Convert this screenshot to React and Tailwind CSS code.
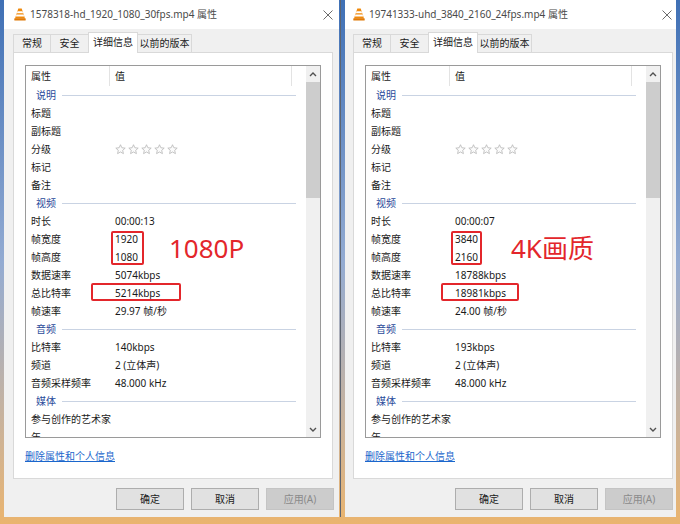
import React from "react";

const FONT = { fontFamily: '"Noto Sans", "Noto Sans CJK SC", sans-serif' };

function Vlc() {
  return (
    <svg width="12" height="13" viewBox="0 0 12 13">
      <path d="M4.3 0.5h3.4l3.3 10H1z" fill="#f08a0c" />
      <path d="M3.5 3.3h5l0.6 1.9H2.9z" fill="#ffffff" />
      <path d="M2.4 6.6h7.2l0.6 1.9H1.8z" fill="#ffffff" />
      <rect x="0.3" y="10.2" width="11.4" height="2.4" rx="0.6" fill="#e07a08" />
    </svg>
  );
}

function CloseX() {
  return (
    <svg width="10" height="10" viewBox="0 0 10 10">
      <path d="M0.5 0.5L9.5 9.5M9.5 0.5L0.5 9.5" stroke="#6b6b6b" strokeWidth="1" />
    </svg>
  );
}

function Star() {
  return (
    <svg width="11" height="11" viewBox="0 0 12 12">
      <path
        d="M6 0.8l1.5 3.3 3.6 0.4-2.7 2.4 0.8 3.6L6 8.7 2.8 10.5l0.8-3.6L0.9 4.5l3.6-0.4z"
        fill="#fbfbfb"
        stroke="#b9b9b9"
        strokeWidth="0.9"
        strokeLinejoin="round"
      />
    </svg>
  );
}

function Chevron({ up }) {
  return (
    <svg width="8" height="5" viewBox="0 0 8 5">
      <path
        d={up ? "M1 4L4 1L7 4" : "M1 1L4 4L7 1"}
        stroke="#505050"
        strokeWidth="1.4"
        fill="none"
      />
    </svg>
  );
}

function Row({ name, value }) {
  return (
    <div className="h-[18px] shrink-0 flex items-center text-[10px] text-[#1a1a1a] whitespace-nowrap">
      <div className="w-[89px] pl-[5px]">{name}</div>
      <div className="flex items-center">
        {value === "stars" ? (
          <div className="flex gap-[2px]">
            <Star />
            <Star />
            <Star />
            <Star />
            <Star />
          </div>
        ) : (
          value
        )}
      </div>
    </div>
  );
}

function Group({ label }) {
  return (
    <div className="h-[18px] shrink-0 flex items-center text-[10px] text-[#2a4a9a] whitespace-nowrap">
      <div className="pl-[10px]">{label}</div>
      <div className="flex-1 h-px bg-[#c9d3e3] ml-[6px] mr-[10px]" />
    </div>
  );
}

function Btn({ label, disabled }) {
  return (
    <div
      className={
        "w-[68px] h-[22px] flex items-center justify-center text-[10px] border " +
        (disabled
          ? "bg-[#cccccc] border-[#c4c4c4] text-[#8a8a8a]"
          : "bg-[#e1e1e1] border-[#adadad] text-[#1a1a1a]")
      }
    >
      {label}
    </div>
  );
}

function Window({ d }) {
  const tabs = [
    { t: "常规", w: 38 },
    { t: "安全", w: 39 },
    { t: "详细信息", w: 50, sel: true },
    { t: "以前的版本", w: 55 },
  ];
  return (
    <div
      className="h-[517px] flex flex-col bg-[#f0f0f0] shrink-0"
      style={{ width: d.width }}
    >
      {/* title bar */}
      <div className="h-[29px] bg-white flex items-center shrink-0">
        <div style={{ marginLeft: d.iconLeft }} className="flex items-center">
          <Vlc />
        </div>
        <div className="ml-[4px] text-[10px] text-[#4a4a4a] whitespace-nowrap">{d.title}</div>
        <div className="flex-1" />
        <div style={{ marginRight: d.closeRight }} className="flex items-center">
          <CloseX />
        </div>
      </div>
      {/* tabs */}
      <div style={{ marginLeft: d.panelLeft }} className="flex items-end h-[23px] shrink-0">
        {tabs.map((tab, i) => (
          <div
            key={i}
            style={{ width: tab.w }}
            className={
              "flex items-center justify-center text-[10px] text-[#1a1a1a] border border-[#d9d9d9] border-b-0 " +
              (i > 0 ? "-ml-px " : "") +
              (tab.sel
                ? "h-[21px] bg-white relative z-10 -mb-px pb-[1px]"
                : "h-[18px] bg-[#f0f0f0]")
            }
          >
            {tab.t}
          </div>
        ))}
      </div>
      {/* panel */}
      <div
        style={{ marginLeft: d.panelLeft }}
        className="w-[320px] h-[427px] bg-white border border-[#d9d9d9] shrink-0 flex flex-col"
      >
        <div className="mt-[12px] mx-[11px] h-[373px] shrink-0 border border-[#9a9a9a] flex relative overflow-hidden">
          <div className="flex-1 flex flex-col overflow-hidden">
            <div className="h-[20px] flex items-center text-[10px] text-[#1a1a1a] shrink-0">
              <div className="w-[84px] h-full flex items-center pl-[5px] border-r border-[#e3e3e3]">属性</div>
              <div className="w-[182px] h-full flex items-center pl-[5px] border-r border-[#e3e3e3]">值</div>
            </div>
            <Group label="说明" />
            <Row name="标题" value="" />
            <Row name="副标题" value="" />
            <Row name="分级" value="stars" />
            <Row name="标记" value="" />
            <Row name="备注" value="" />
            <Group label="视频" />
            <Row name="时长" value={d.dur} />
            <Row name="帧宽度" value={d.w} />
            <Row name="帧高度" value={d.h} />
            <Row name="数据速率" value={d.data} />
            <Row name="总比特率" value={d.total} />
            <Row name="帧速率" value={d.fps} />
            <Group label="音频" />
            <Row name="比特率" value={d.abr} />
            <Row name="频道" value="2 (立体声)" />
            <Row name="音频采样频率" value="48.000 kHz" />
            <Group label="媒体" />
            <Row name="参与创作的艺术家" value="" />
            <Row name="年" value="" />
          </div>
          {/* scrollbar */}
          <div className="w-[14px] flex flex-col bg-[#f0f0f0] shrink-0">
            <div className="h-[16px] flex items-center justify-center">
              <Chevron up />
            </div>
            <div className="h-[116px] bg-[#cdcdcd]" />
            <div className="flex-1" />
            <div className="h-[16px] flex items-center justify-center">
              <Chevron />
            </div>
          </div>
          {/* annotations */}
          <div
            className="absolute border-2 border-[#e3262b] rounded-[2px]"
            style={{ left: 85, top: 165, width: d.box1w, height: 34 }}
          />
          <div
            className="absolute border-2 border-[#e3262b] rounded-[2px]"
            style={{ left: d.box2l, top: 217, width: d.box2w, height: 18 }}
          />
          <div
            className="absolute text-[26px] leading-none text-[#e3262b] whitespace-nowrap"
            style={{ left: d.labelLeft, top: 169 }}
          >
            {d.label}
          </div>
        </div>
        <div className="mt-[11px] ml-[11px] text-[10px] text-[#1a66cc] underline">删除属性和个人信息</div>
      </div>
      {/* buttons */}
      <div className="flex justify-end gap-[7px] mt-[9px]" style={{ marginRight: d.btnRight }}>
        <Btn label="确定" />
        <Btn label="取消" />
        <Btn label="应用(A)" disabled />
      </div>
    </div>
  );
}

export default function App() {
  const left = {
    width: 335,
    iconLeft: 10,
    closeRight: 6,
    panelLeft: 9,
    btnRight: 5,
    title: "1578318-hd_1920_1080_30fps.mp4 属性",
    dur: "00:00:13",
    w: "1920",
    h: "1080",
    data: "5074kbps",
    total: "5214kbps",
    fps: "29.97 帧/秒",
    abr: "140kbps",
    label: "1080P",
    labelLeft: 143,
    box1w: 33,
    box2l: 65,
    box2w: 90,
  };
  const right = {
    width: 331,
    iconLeft: 8,
    closeRight: 4,
    panelLeft: 8,
    btnRight: 3,
    title: "19741333-uhd_3840_2160_24fps.mp4 属性",
    dur: "00:00:07",
    w: "3840",
    h: "2160",
    data: "18788kbps",
    total: "18981kbps",
    fps: "24.00 帧/秒",
    abr: "193kbps",
    label: "4K画质",
    labelLeft: 145,
    box1w: 31,
    box2l: 75,
    box2w: 78,
  };
  return (
    <div
      style={FONT}
      className="w-[680px] h-[524px] overflow-hidden flex items-start gap-[3px] pl-[4px] bg-linear-to-b from-[#3f70b5] via-[#93abd2] to-[#eab46e]"
    >
      <Window d={left} />
      <div className="border-l border-[#5d6470] h-[517px] -ml-[2px] mr-[1px]" />
      <Window d={right} />
    </div>
  );
}
